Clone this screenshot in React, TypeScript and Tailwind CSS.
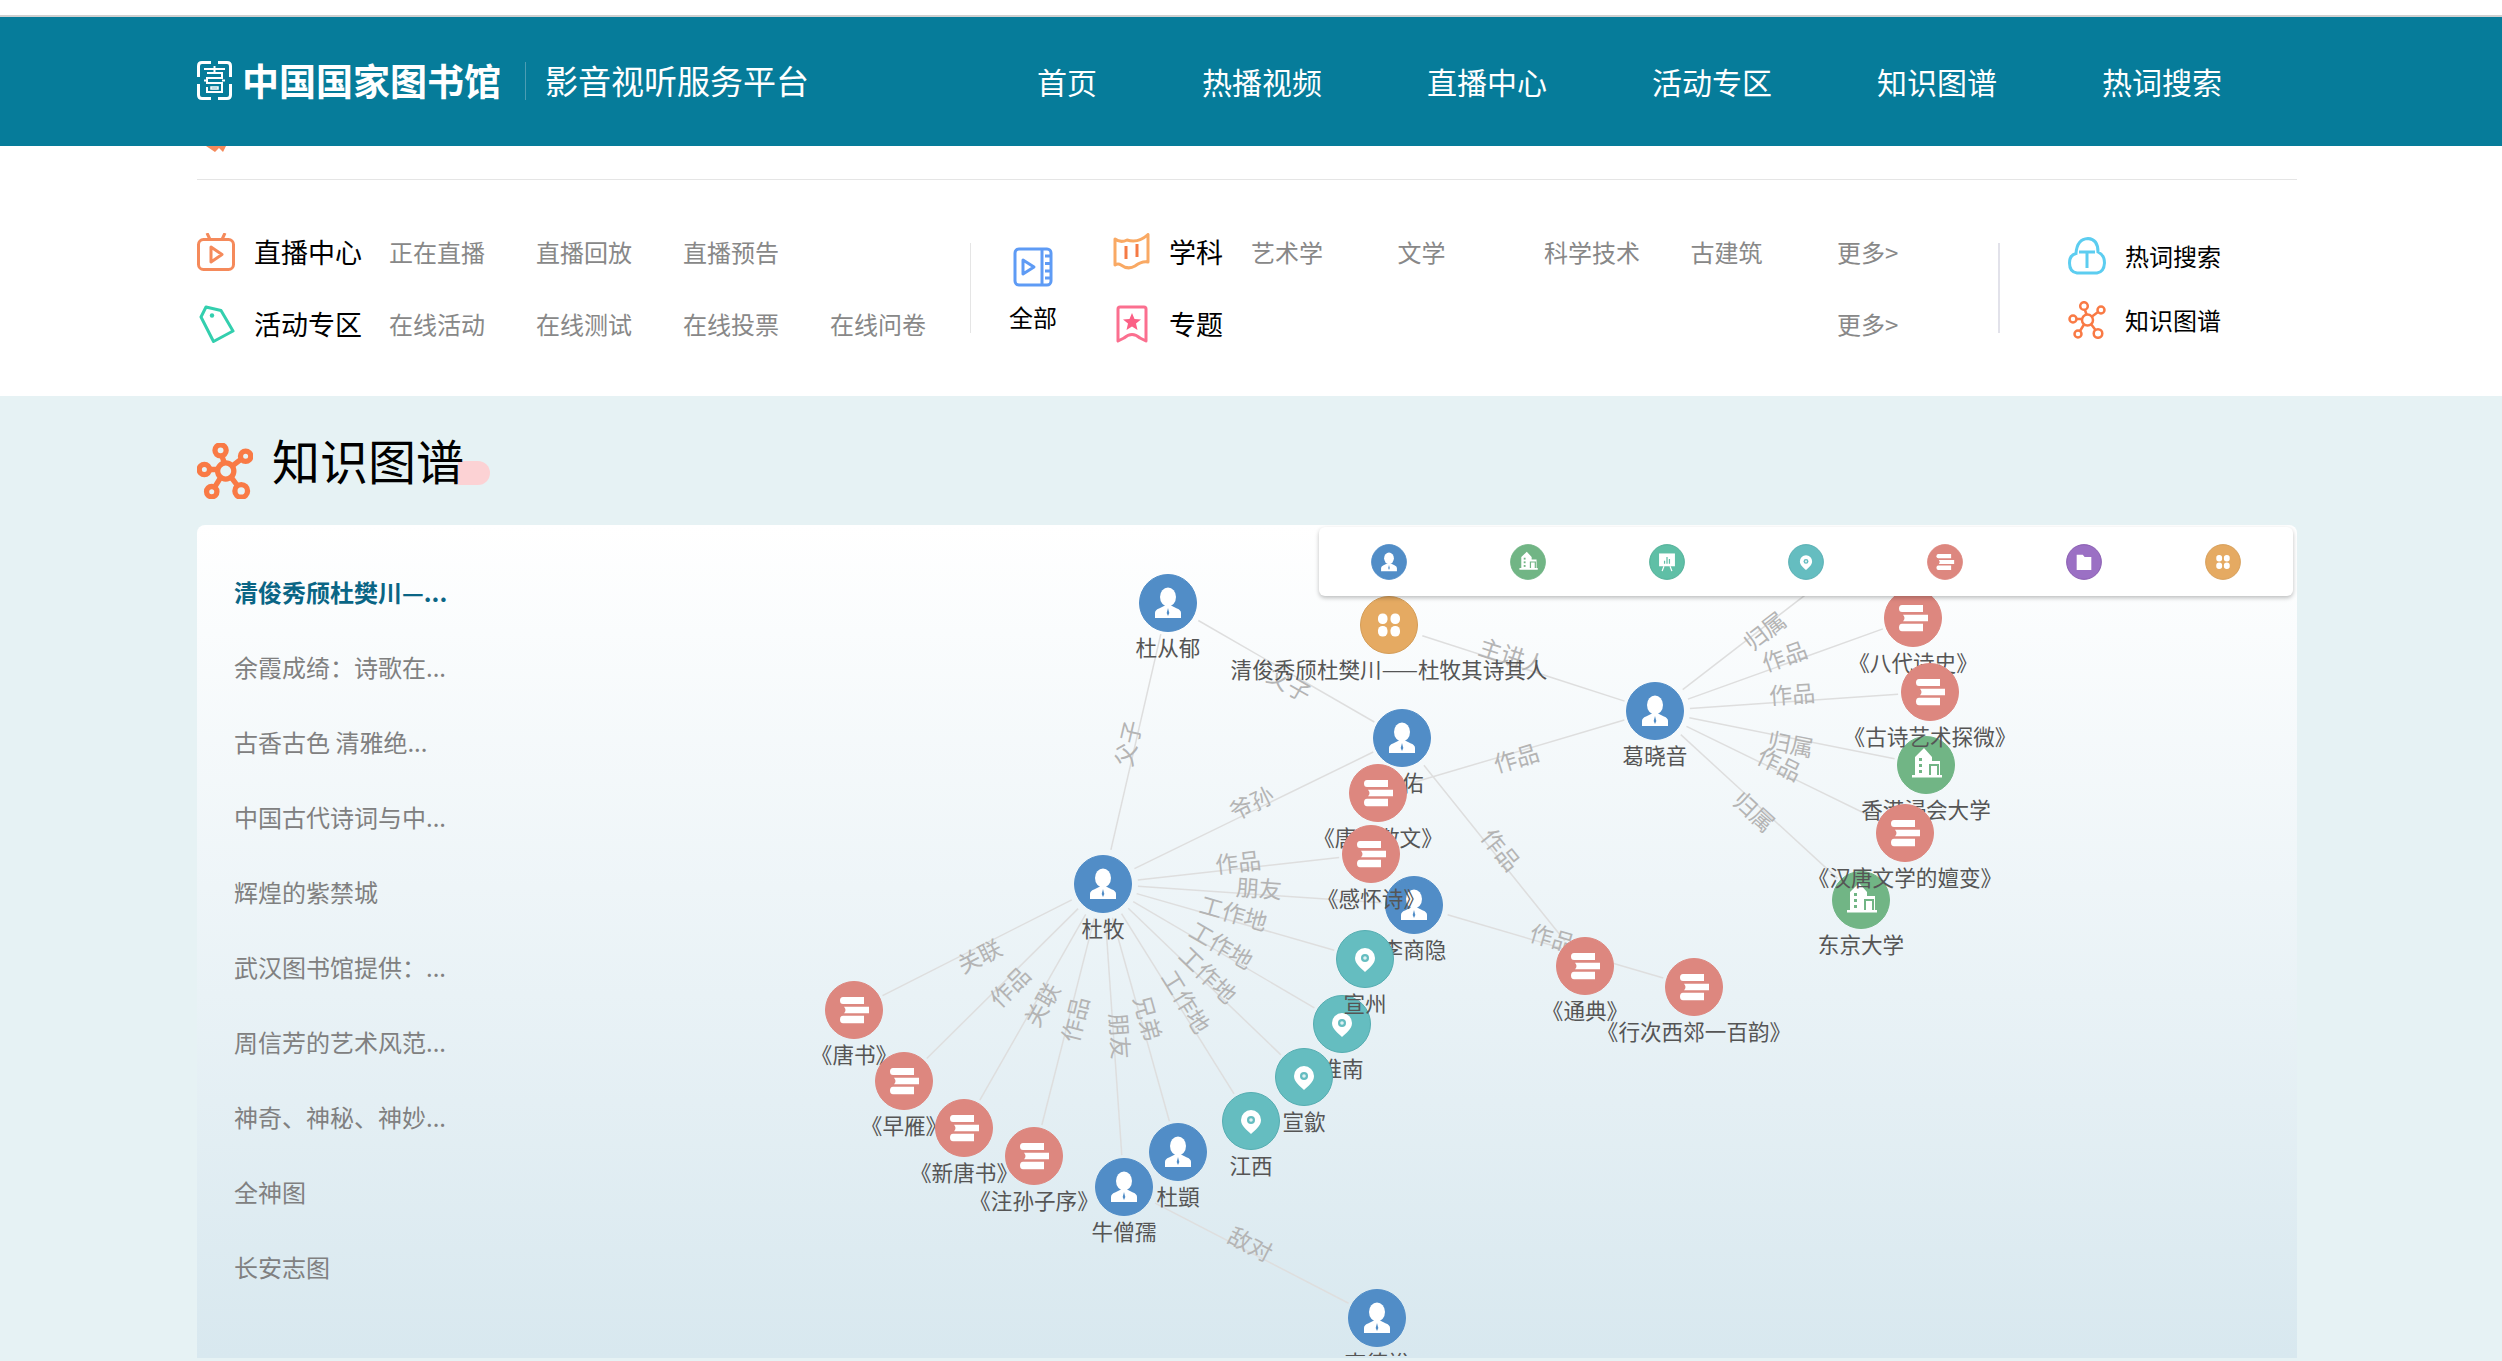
import React from "react";

type Kind = "p" | "b" | "g" | "l" | "o" | "s" | "f";
const fills: Record<Kind, string> = { p: "#518dc7", b: "#dd877f", g: "#71b585", l: "#65bdc0", o: "#e5aa62", s: "#5fbfa6", f: "#9b70c4" };
const rings: Record<Kind, string> = { p: "#518dc7", b: "#dd877f", g: "#71b585", l: "#55adb1", o: "#d49d58", s: "#4fae96", f: "#8559ae" };

function Glyph({ k }: { k: Kind }) {
  if (k === "p")
    return (
      <g fill="#fff">
        <ellipse cx="0" cy="-6" rx="8" ry="9.5" />
        <path d="M-13 15V10Q-13 7-9 5.5L-4 3H4L9 5.5Q13 7 13 10V15Z" />
        <path d="M0 5L1.3 10L0 13L-1.3 10Z" fill="#518dc7" />
      </g>
    );
  if (k === "b")
    return (
      <g fill="#fff">
        <path d="M-11-13H10V-6H-11Q-14-6-14-9.5T-11-13Z" />
        <path d="M-10-3.3H15V3.3H-10Q-7-0-10-3.3Z" />
        <path d="M-11 5.7H10V13.3H-11Q-14 13.3-14 9.5T-11 5.7Z" />
      </g>
    );
  if (k === "g")
    return (
      <g fill="#fff">
        <path d="M-14 10H16V12.5H-14Z" />
        <path d="M-11 10V-8L-2-17L6-8V-4H14V10Z" />
        <g fill="#71b585">
          <rect x="-7" y="-7" width="3" height="3" />
          <rect x="-7" y="-1" width="3" height="3" />
          <rect x="-7" y="5" width="3" height="3" />
        </g>
        <path d="M4 10V0H12V10" fill="none" stroke="#71b585" strokeWidth="2" />
      </g>
    );
  if (k === "l")
    return (
      <g>
        <path d="M0 13C-4 9-10 5-10-1A10 10 0 0 1 10-1C10 5 4 9 0 13Z" fill="#fff" />
        <circle cx="0" cy="-1" r="4" fill="#65bdc0" />
        <circle cx="0" cy="-1" r="1.8" fill="#dff1f2" />
      </g>
    );
  if (k === "o")
    return (
      <g fill="#fff">
        <rect x="-11" y="-11.5" width="9.5" height="10.5" rx="4.5" />
        <rect x="1.5" y="-11.5" width="9.5" height="10.5" rx="4.5" />
        <rect x="-11" y="1" width="9.5" height="10.5" rx="4.5" />
        <rect x="1.5" y="1" width="9.5" height="10.5" rx="4.5" />
      </g>
    );
  if (k === "s")
    return (
      <g>
        <rect x="-13" y="-14" width="26" height="21" fill="#fff" />
        <path d="M-5 7L-8 15M5 7L8 15" stroke="#fff" strokeWidth="2" />
        <path d="M-4 3V-2M0 3V-8M4 3V-5" stroke="#5fbfa6" strokeWidth="2" />
      </g>
    );
  return <path d="M-12-12H-2L1-8H12V13H-12Z" fill="#fff" />;
}

type N = { id: string; k: Kind; x: number; y: number; label: string };
const nodeList: N[] = [
  { id: "cy", k: "p", x: 1168, y: 603, label: "杜从郁" },
  { id: "qj", k: "o", x: 1389, y: 625, label: "清俊秀颀杜樊川——杜牧其诗其人" },
  { id: "dy", k: "p", x: 1402, y: 738, label: "杜佑" },
  { id: "ts", k: "b", x: 1378, y: 793, label: "《唐代散文》" },
  { id: "gh", k: "b", x: 1371, y: 854, label: "《感怀诗》" },
  { id: "ls", k: "p", x: 1414, y: 905, label: "李商隐" },
  { id: "xz", k: "l", x: 1365, y: 959, label: "宣州" },
  { id: "hn", k: "l", x: 1342, y: 1024, label: "淮南" },
  { id: "xs", k: "l", x: 1304, y: 1077, label: "宣歙" },
  { id: "jx", k: "l", x: 1251, y: 1121, label: "江西" },
  { id: "dq", k: "p", x: 1178, y: 1152, label: "杜顗" },
  { id: "nc", k: "p", x: 1124, y: 1187, label: "牛僧孺" },
  { id: "zs", k: "b", x: 1034, y: 1156, label: "《注孙子序》" },
  { id: "xt", k: "b", x: 964, y: 1128, label: "《新唐书》" },
  { id: "zy", k: "b", x: 904, y: 1081, label: "《早雁》" },
  { id: "tb", k: "b", x: 854, y: 1010, label: "《唐书》" },
  { id: "dm", k: "p", x: 1103, y: 884, label: "杜牧" },
  { id: "ge", k: "p", x: 1655, y: 711, label: "葛晓音" },
  { id: "bd", k: "b", x: 1913, y: 618, label: "《八代诗史》" },
  { id: "gs", k: "b", x: 1930, y: 692, label: "《古诗艺术探微》" },
  { id: "hk", k: "g", x: 1926, y: 765, label: "香港浸会大学" },
  { id: "hw", k: "b", x: 1905, y: 833, label: "《汉唐文学的嬗变》" },
  { id: "dj", k: "g", x: 1861, y: 900, label: "东京大学" },
  { id: "td", k: "b", x: 1585, y: 966, label: "《通典》" },
  { id: "xc", k: "b", x: 1694, y: 987, label: "《行次西郊一百韵》" },
  { id: "ld", k: "p", x: 1377, y: 1318, label: "李德裕" },
];
const byId = Object.fromEntries(nodeList.map((n) => [n.id, n]));
const hidden = { x: 1870, y: 545 };

const edges: [string, string, string, number, number][] = [
  ["dm", "cy", "父子", 1127, 743],
  ["cy", "dy", "父子", 1290, 683],
  ["dm", "dy", "爷孙", 1251, 802],
  ["dm", "gh", "作品", 1238, 861],
  ["dm", "ls", "朋友", 1259, 887],
  ["dm", "xz", "工作地", 1234, 912],
  ["dm", "hn", "工作地", 1222, 944],
  ["dm", "xs", "工作地", 1209, 974],
  ["dm", "jx", "工作地", 1187, 1001],
  ["dm", "dq", "兄弟", 1149, 1018],
  ["dm", "nc", "朋友", 1121, 1036],
  ["dm", "zs", "作品", 1074, 1019],
  ["dm", "xt", "关联", 1041, 1004],
  ["dm", "zy", "作品", 1009, 986],
  ["dm", "tb", "关联", 979, 955],
  ["nc", "ld", "敌对", 1251, 1243],
  ["ts", "ge", "作品", 1516, 757],
  ["dy", "td", "作品", 1502, 849],
  ["ls", "xc", "作品", 1553, 937],
  ["qj", "ge", "主讲人", 1513, 655],
  ["ge", "bd", "作品", 1784, 655],
  ["ge", "gs", "作品", 1792, 693],
  ["ge", "hk", "归属", 1791, 743],
  ["ge", "hw", "作品", 1780, 763],
  ["ge", "dj", "归属", 1755, 811],
  ["ge", "hidden", "归属", 1764, 630],
];

const order = [
  "ltb", "ntb", "lzy", "nzy", "lxt", "nxt", "lzs", "nzs",
  "ncy", "lcy", "nqj", "lqj", "ndy", "ldy", "nts", "lts", "nls", "ngh", "lgh", "lls", "nxz", "nhn", "lxz", "lhn",
  "nxs", "lxs", "njx", "ljx", "ndq", "ldq", "nnc", "lnc",
  "ndm", "ldm", "nge", "lge", "nbd", "lbd", "ngs", "nhk", "lgs", "lhk", "nhw", "ndj", "lhw", "ldj", "ntd", "ltd", "nxc", "lxc", "nld", "lld",
];

function Edge({ e }: { e: [string, string, string, number, number] }) {
  const a = byId[e[0]];
  const b = e[1] === "hidden" ? hidden : byId[e[1]];
  const dx = b.x - a.x;
  const dy = b.y - a.y;
  const len = Math.hypot(dx, dy);
  const ux = dx / len;
  const uy = dy / len;
  let ang = (Math.atan2(dy, dx) * 180) / Math.PI;
  if (ang > 90) ang -= 180;
  if (ang < -90) ang += 180;
  return (
    <g>
      <line x1={a.x + ux * 35} y1={a.y + uy * 35} x2={b.x - ux * 32} y2={b.y - uy * 32} stroke="#dedede" strokeWidth="1.5" />
      <text x={e[3]} y={e[4]} transform={`rotate(${ang} ${e[3]} ${e[4]})`} textAnchor="middle" dominantBaseline="central" fontSize="23" fill="#b4b4b4">
        {e[2]}
      </text>
    </g>
  );
}

function Graph() {
  return (
    <svg className="absolute left-0 top-0 w-[2100px] h-[831px]" viewBox="197 525 2100 831">
      {edges.map((e, i) => (
        <Edge key={i} e={e} />
      ))}
      {order.map((op) => {
        const n = byId[op.slice(1)];
        if (op[0] === "n")
          return (
            <g key={op} transform={`translate(${n.x} ${n.y})`}>
              <circle r="28.5" fill={fills[n.k]} stroke={rings[n.k]} strokeWidth="1" />
              <Glyph k={n.k} />
            </g>
          );
        return (
          <text key={op} x={n.x} y={n.y + 43} textAnchor="middle" dominantBaseline="central" fontSize="21.6" fill="#555">
            {n.label}
          </text>
        );
      })}
    </svg>
  );
}

function ToolIcon({ k }: { k: Kind }) {
  return (
    <svg className="w-[36px] h-[36px]" viewBox="-29.5 -29.5 59 59">
      <circle r="28.5" fill={fills[k]} stroke={rings[k]} strokeWidth="1.5" />
      <Glyph k={k} />
    </svg>
  );
}

const Tv = () => (
  <svg className="w-[38px] h-[38px]" viewBox="0 0 38 38" fill="none" stroke="#f58a5b" strokeWidth="3">
    <rect x="1.5" y="6.5" width="35" height="30" rx="5" />
    <path d="M10 0L13 6.500M28 0L25 6.500" />
    <path d="M14 14L25 21.500L14 29Z" strokeLinejoin="round" />
  </svg>
);
const Tag = () => (
  <svg className="w-[36px] h-[38px]" viewBox="0 0 36 38" fill="none" stroke="#33cfae" strokeWidth="3" strokeLinejoin="round">
    <path d="M7 2L22 5.500L34 26L14.500 36.500L2 12Z" />
    <circle cx="13" cy="10.500" r="2.200" fill="#33cfae" stroke="none" />
  </svg>
);
const Film = () => (
  <svg className="w-[40px] h-[40px]" viewBox="0 0 40 40" fill="none" stroke="#5e9bf5" strokeWidth="3">
    <rect x="2" y="2" width="36" height="36" rx="4" />
    <path d="M29 2V38" />
    <path d="M32 9H38M32 16.500H38M32 24H38M32 31H38" />
    <path d="M10 13L21 20L10 27Z" strokeLinejoin="round" />
  </svg>
);
const Book = () => (
  <svg className="w-[38px] h-[38px]" viewBox="0 0 38 38" fill="none" strokeWidth="3" strokeLinejoin="round">
    <path d="M2 6C6 9 10 9 14 7C20 9 28 8 35 1.500V29C30 28 26 30 22 33C17 36 12 35 8 32Q5 30 2 32Z" stroke="#f9a964" />
    <path d="M13 13V26M24 11V24" stroke="#f57a45" />
  </svg>
);
const Mark = () => (
  <svg className="w-[32px] h-[38px]" viewBox="0 0 32 38" fill="none">
    <path d="M4 2H28Q30 2 30 4V36L24 33Q16 26 8 33L2 36V4Q2 2 4 2Z" stroke="#fb6f8f" strokeWidth="3" strokeLinejoin="round" />
    <path d="M16 8L18.500 14L25 14.500L20 18.500L21.500 25L16 21.500L10.500 25L12 18.500L7 14.500L13.500 14Z" fill="#fb5f85" />
  </svg>
);
const Cloud = () => (
  <svg className="w-[38px] h-[38px]" viewBox="0 0 38 38" fill="none" stroke="#5ccdf0" strokeWidth="3">
    <path d="M9 36Q1.500 35 1.500 26Q1.500 18 8 16.500Q9 2 20 1.500Q30 2 30 15Q36.500 18 36.500 26Q36 35 29 36Z" />
    <path d="M11 15H27M19 15V31" />
  </svg>
);
const Net = ({ cls, w }: { cls: string; w: number }) => (
  <svg className={cls} viewBox="0 0 38 38" fill="none" stroke="#f97a45" strokeWidth={w}>
    <circle cx="19.500" cy="19" r="5.500" />
    <circle cx="16" cy="5" r="3.800" />
    <circle cx="33" cy="9" r="3.500" />
    <circle cx="5" cy="18" r="3.500" />
    <circle cx="10" cy="33" r="3.500" />
    <circle cx="30" cy="32.500" r="4.300" />
    <path d="M17 9L18.500 13.500M30 11L24 15.500M8.500 18H14M12 30L16 23.500M27.500 29L23 23" />
  </svg>
);
const Logo = () => (
  <svg className="w-[35px] h-[39px]" viewBox="0 0 35 39" fill="none" stroke="#fff">
    <path d="M14 1.500H5Q1.500 1.500 1.500 5V16M21 1.500H30Q33.500 1.500 33.500 5V16M14 37.500H5Q1.500 37.500 1.500 34V23M21 37.500H30Q33.500 37.500 33.500 34V23" strokeWidth="3" />
    <path d="M7 8H28M10 12H25V17H10V22H25V31H10V26M17.500 5V12M7 19.500H10M25 19.500H28" strokeWidth="2" />
    <rect x="14" y="26" width="7" height="2" strokeWidth="1.500" />
  </svg>
);

const navs = ["首页", "热播视频", "直播中心", "活动专区", "知识图谱", "热词搜索"];
const rowA = ["正在直播", "直播回放", "直播预告"];
const rowB = ["在线活动", "在线测试", "在线投票", "在线问卷"];
const subj = ["艺术学", "文学", "科学技术", "古建筑", "更多>"];
const list = ["余霞成绮：诗歌在...", "古香古色 清雅绝...", "中国古代诗词与中...", "辉煌的紫禁城", "武汉图书馆提供：...", "周信芳的艺术风范...", "神奇、神秘、神妙...", "全神图", "长安志图"];
const tools: Kind[] = ["p", "g", "s", "l", "b", "f", "o"];

export default function App() {
  return (
    <div className="w-[2502px] h-[1361px] overflow-hidden bg-white [font-family:'Noto_Sans_CJK_SC','Liberation_Sans',sans-serif]">
      <div className="h-[17px] bg-white border-b-2 border-[#d0d0d0]" />
      <header className="h-[129px] bg-[#067c9a] flex items-center text-white pl-[197px] pb-[2px]">
        <Logo />
        <span className="ml-[10px] text-[37px] font-bold leading-none whitespace-nowrap">中国国家图书馆</span>
        <span className="ml-[24px] w-px h-[38px] bg-[#4c9db3]" />
        <span className="ml-[19px] text-[33px] leading-none whitespace-nowrap">影音视听服务平台</span>
        <nav className="ml-[228px] flex gap-[105px] text-[30px] leading-none">
          {navs.map((n) => (
            <span key={n} className="whitespace-nowrap">{n}</span>
          ))}
        </nav>
      </header>

      <section className="relative h-[250px] pl-[197px] pr-[205px] bg-white">
        <svg className="absolute left-[206px] top-0 w-[20px] h-[6px]" viewBox="0 0 20 6">
          <path d="M0 0H20L17 6L13 2L9 6Z" fill="#f58a5b" />
        </svg>
        <div className="pt-[33px]">
          <div className="h-px bg-[#e5e5e5]" />
        </div>
        <div className="flex pt-[36px]">
          <div className="w-[773px] shrink-0">
            <div className="flex items-center h-[72px]">
              <div className="w-[57px] shrink-0"><Tv /></div>
              <span className="w-[135px] shrink-0 text-[27px] text-black">直播中心</span>
              {rowA.map((t) => (
                <span key={t} className="w-[147px] shrink-0 text-[24px] text-[#888]">{t}</span>
              ))}
            </div>
            <div className="flex items-center h-[72px]">
              <div className="w-[57px] shrink-0 pl-[2px]"><Tag /></div>
              <span className="w-[135px] shrink-0 text-[27px] text-black">活动专区</span>
              {rowB.map((t) => (
                <span key={t} className="w-[147px] shrink-0 text-[24px] text-[#888]">{t}</span>
              ))}
            </div>
          </div>
          <div className="w-px shrink-0 h-[90px] mt-[27px] bg-[#e5e5e5]" />
          <div className="w-[124px] shrink-0 mr-[18px] pt-[31px] flex flex-col items-center">
            <Film />
            <span className="mt-[12px] text-[24px] leading-[36px] text-black">全部</span>
          </div>
          <div className="w-[885px] shrink-0">
            <div className="flex items-center h-[72px]">
              <div className="w-[57px] shrink-0"><Book /></div>
              <span className="w-[81px] shrink-0 text-[27px] text-black -ml-px mr-px">学科</span>
              {subj.map((t) => (
                <span key={t} className="w-[146.5px] shrink-0 text-[24px] text-[#888] whitespace-nowrap">{t}</span>
              ))}
            </div>
            <div className="flex items-center h-[72px]">
              <div className="w-[57px] shrink-0 pl-[3px]"><Mark /></div>
              <span className="w-[81px] shrink-0 text-[27px] text-black -ml-px mr-px">专题</span>
              <span className="ml-[586px] text-[24px] text-[#888] whitespace-nowrap">更多&gt;</span>
            </div>
          </div>
          <div className="w-[2px] shrink-0 h-[90px] mt-[27px] bg-[#e2e2ea]" />
          <div className="ml-[68px] mt-[8px] shrink-0">
            <div className="flex items-center h-[64px]">
              <Cloud />
              <span className="ml-[19px] text-[24px] text-black">热词搜索</span>
            </div>
            <div className="flex items-center h-[64px]">
              <Net cls="w-[38px] h-[38px]" w={2.5} />
              <span className="ml-[19px] text-[24px] text-black">知识图谱</span>
            </div>
          </div>
        </div>
      </section>

      <main className="h-[965px] bg-[#e6f2f4] px-[197px]">
        <div className="h-[129px] pt-[47px] flex items-start">
          <Net cls="w-[56px] h-[56px]" w={3.6} />
          <div className="relative ml-[19px] h-[56px]">
            <span className="absolute left-[186px] top-[18px] w-[32px] h-[24px] rounded-r-full bg-[#fcd2d4]" />
            <span className="relative block text-[48px] leading-[32px] text-black whitespace-nowrap">知识图谱</span>
          </div>
        </div>
        <div className="relative w-[2100px] h-[833px] rounded-t-[8px] overflow-hidden bg-gradient-to-b from-white to-[#d8e8ef]">
          <ul className="relative pl-[37px] pt-[29px] w-[400px] text-[24px] leading-[75px] text-[#808080]">
            <li className="font-bold text-[#0a6585]">清俊秀颀杜樊川—...</li>
            {list.map((t) => (
              <li key={t}>{t}</li>
            ))}
          </ul>
          <Graph />
          <div className="absolute left-[1122px] top-[2px] w-[974px] h-[69px] rounded-[6px] bg-white shadow-[0_2px_4px_rgba(0,0,0,0.25)] flex items-center justify-around">
            {tools.map((k) => (
              <ToolIcon key={k} k={k} />
            ))}
          </div>
        </div>
      </main>
    </div>
  );
}
